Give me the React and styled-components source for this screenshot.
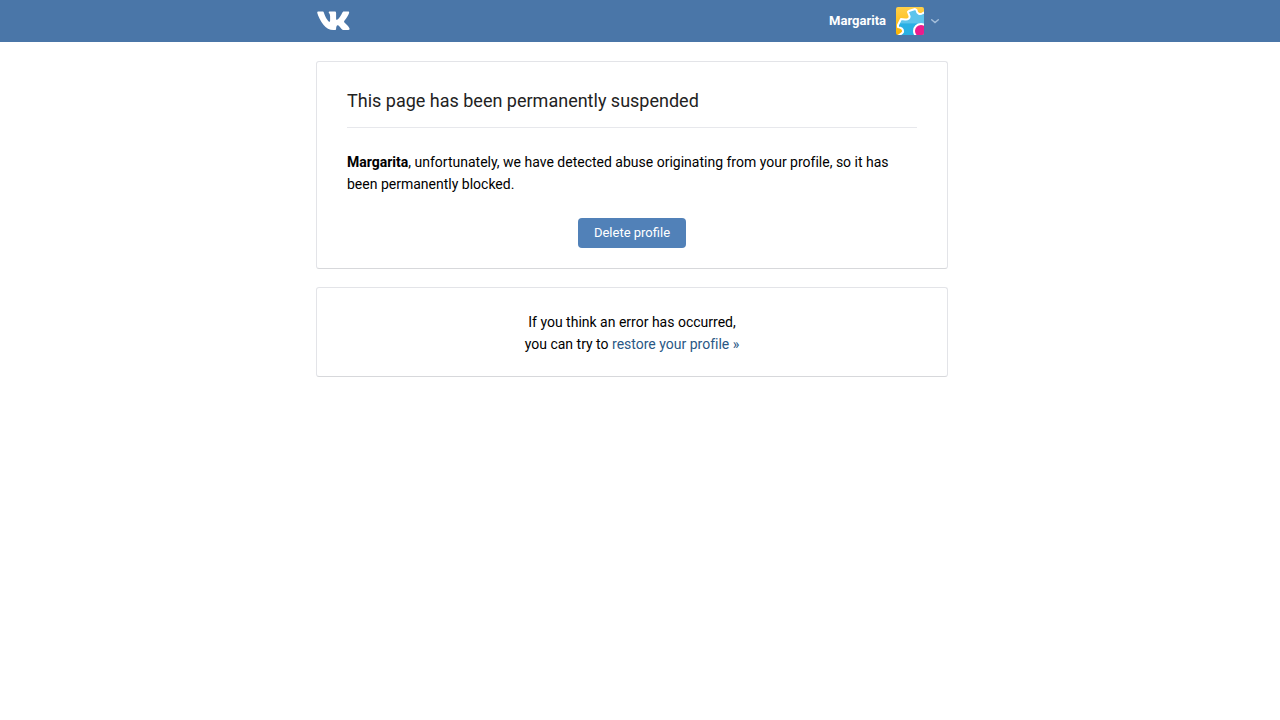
import React from 'react';
import styled, { createGlobalStyle } from 'styled-components';

const GlobalStyle = createGlobalStyle`
    * {
        box-sizing: border-box;
    }
    body {
        margin: 0;
        background: #fff;
        color: #000;
        font-family: Roboto, "Open Sans", sans-serif;
        font-size: 14px;
        line-height: 22px;
        text-rendering: optimizeSpeed;
    }
`;

function Logo() {
    return (
        <svg width="34" height="20" viewBox="0 0 34 20" aria-hidden="true">
            <path
                fill="#fff"
                d="M16.400 19h1.800c.6 0 .9-.4.9-.9 0-2.600.7-4.600 2.300-3.700 1.900 1.100 3.200 4.600 5.300 4.600h4.500c1.400 0 1.700-.9 1.100-2-.8-1.600-2.400-3.200-4.600-5.300-.8-.8-.8-1.300-.1-2.200 1.700-2.200 3.900-5.300 4.500-7.600.2-.9-.1-1.400-1.100-1.400h-4c-.9 0-1.300.4-1.600 1.100-1.400 3.100-3.300 5.900-4.900 7-.9.6-1.400.2-1.400-.9V2c0-1.100-.3-1.600-1.300-1.600h-5c-.7 0-1.100.4-1.100.9 0 1 1.400 1.200 1.400 4v4.100c0 1-.2 1.400-.8 1.300C10.900 10.400 8.300 6 7 2 6.700.9 6.300.5 5.400.5H1.500C.4.500.1 1.100.3 2c.7 2.900 3.100 8 6.100 11.700C9 17 12.700 19 16.400 19z"
            />
        </svg>
    );
}

function Avatar() {
    return (
        <AvatarSvg viewBox="0 0 28 28" role="img" aria-label="Profile photo">
            <defs>
                <linearGradient id="sun" x1="0" y1="0" x2="0" y2="1">
                    <stop offset="0" stopColor="#ffd04a" />
                    <stop offset="1" stopColor="#fdb400" />
                </linearGradient>
                <linearGradient id="sky" x1="0" y1="0" x2="0" y2="1">
                    <stop offset="0.46" stopColor="#5cc4ec" />
                    <stop offset="0.5" stopColor="#29b0e4" />
                </linearGradient>
            </defs>
            <rect width="28" height="28" fill="url(#sun)" />
            <path
                d="M0 30C3 28 6 27 7 25 7.500 22 5 20.500 2 20L2 18 5 12 9 12.500C12 13 14 11 13.500 9L12 5 13 4 19 2 20.500 3C21 7 24 8 27 6L32 4V32H0z"
                fill="url(#sky)"
                stroke="#fff"
                strokeWidth="2"
                strokeLinejoin="round"
            />
            <circle cx="25" cy="24" r="7" fill="#ec1c8c" stroke="#fff" strokeWidth="2" />
        </AvatarSvg>
    );
}

function App() {
    return (
        <>
            <GlobalStyle />
            <Header>
                <HeaderInner>
                    <LogoLink href="#" aria-label="VK">
                        <Logo />
                    </LogoLink>
                    <ProfileButton type="button">
                        <span>Margarita</span>
                        <Avatar />
                        <svg width="8" height="5" viewBox="0 0 8 5" aria-hidden="true">
                            <path d="M.7.8 4 3.600 7.300.8" fill="none" stroke="#a6bfdb" strokeWidth="1.400" strokeLinecap="round" />
                        </svg>
                    </ProfileButton>
                </HeaderInner>
            </Header>
            <Content>
                <Column>
                    <Card>
                        <Title>This page has been permanently suspended</Title>
                        <Message>
                            <b>Margarita</b>, unfortunately, we have detected abuse originating from your profile, so it
                            has been permanently blocked.
                        </Message>
                        <Actions>
                            <Button type="button">Delete profile</Button>
                        </Actions>
                    </Card>
                    <Card $centered>
                        If you think an error has occurred,
                        <br />
                        you can try to <Link href="#">restore your profile »</Link>
                    </Card>
                </Column>
            </Content>
        </>
    );
}

const Header = styled.header`
    padding-right: 16px;
    background: #4a76a8;
`;

const HeaderInner = styled.div`
    display: flex;
    align-items: center;
    justify-content: space-between;
    max-width: 632px;
    height: 42px;
    margin: 0 auto;
`;

const LogoLink = styled.a`
    display: flex;
    padding-left: 1px;
`;

const ProfileButton = styled.button`
    display: flex;
    align-items: center;
    height: 42px;
    padding: 0 9px;
    border: 0;
    background: none;
    color: #fff;
    font: 700 13px/18px Roboto, "Open Sans", sans-serif;
    cursor: pointer;
    span {
        margin-right: 10px;
    }
`;

const AvatarSvg = styled.svg`
    width: 28px;
    height: 28px;
    margin-right: 7px;
    border-radius: 2px;
`;

const Content = styled.main`
    padding: 19px 16px 0 0;
`;

const Column = styled.div`
    display: flex;
    flex-direction: column;
    gap: 18px;
    max-width: 632px;
    margin: 0 auto;
`;

const Card = styled.section`
    padding: ${(props) => (props.$centered ? '23px 30px 21px' : '20px 30px')};
    border: 1px solid #e3e4e8;
    border-bottom-color: #d7d8db;
    border-radius: 3px;
    text-align: ${(props) => (props.$centered ? 'center' : 'left')};
`;

const Title = styled.h1`
    margin: 0 0 23px;
    padding: 7px 0 14px;
    border-bottom: 1px solid #e7e8ec;
    color: #222;
    font-size: 18px;
    font-weight: 400;
    line-height: 24px;
`;

const Message = styled.p`
    margin: 0;
`;

const Actions = styled.div`
    display: flex;
    justify-content: center;
    margin-top: 23px;
`;

const Button = styled.button`
    height: 30px;
    padding: 0 16px;
    border: 0;
    border-radius: 4px;
    background: #5181b8;
    color: #fff;
    font: 400 13px/18px Roboto, "Open Sans", sans-serif;
    cursor: pointer;
`;

const Link = styled.a`
    color: #2a5885;
    text-decoration: none;
`;

export default App;
